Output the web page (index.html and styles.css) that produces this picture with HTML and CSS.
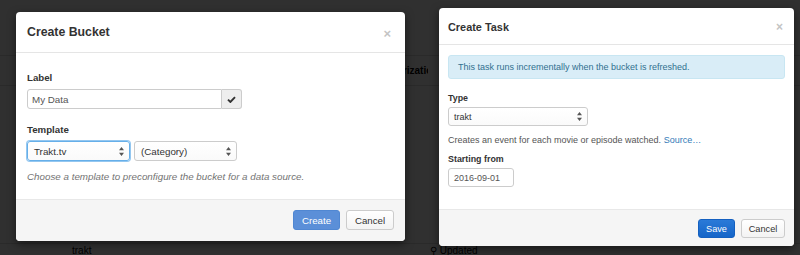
FILE: index.html
```html
<!DOCTYPE html>
<html lang="en">
<head>
    <meta charset="UTF-8">
    <meta name="viewport" content="width=device-width, initial-scale=1.0">
    <title>Create Bucket / Create Task</title>
    <link rel="stylesheet" href="styles.css">
</head>
<body>
    <!-- page underneath the dialogs -->
    <div class="page">
        <div class="page-head">
            <span class="col-auth">Authorization</span>
        </div>
        <div class="page-row">
            <span class="col-name">trakt</span>
            <span class="col-updated">&#9906; Updated</span>
        </div>
    </div>

    <div class="backdrop">
        <div class="modal modal-bucket">
            <div class="modal-header">
                <h4 class="modal-title">Create Bucket</h4>
                <span class="close">&times;</span>
            </div>
            <div class="modal-body">
                <div class="form-group">
                    <label>Label</label>
                    <div class="input-group">
                        <div class="form-control">My Data</div>
                        <span class="addon">
                            <svg width="9" height="7" viewBox="0 0 9 7"><path d="M1 3.6 L3.4 6 L8 1.2" fill="none" stroke="#333" stroke-width="1.9"/></svg>
                        </span>
                    </div>
                </div>
                <div class="form-group">
                    <label>Template</label>
                    <div class="select-row">
                        <div class="select select-focus">Trakt.tv
                            <svg class="arrows" width="5" height="9" viewBox="0 0 5 9"><path d="M2.5 0 L5 3.3 H0 Z M2.5 9 L5 5.7 H0 Z" fill="#555"/></svg>
                        </div>
                        <div class="select">(Category)
                            <svg class="arrows" width="5" height="9" viewBox="0 0 5 9"><path d="M2.5 0 L5 3.3 H0 Z M2.5 9 L5 5.7 H0 Z" fill="#555"/></svg>
                        </div>
                    </div>
                    <p class="help">Choose a template to preconfigure the bucket for a data source.</p>
                </div>
            </div>
            <div class="modal-footer">
                <button class="btn btn-create">Create</button>
                <button class="btn btn-default">Cancel</button>
            </div>
        </div>

        <div class="modal modal-task">
            <div class="modal-header">
                <h4 class="modal-title">Create Task</h4>
                <span class="close">&times;</span>
            </div>
            <div class="modal-body">
                <div class="alert">This task runs incrementally when the bucket is refreshed.</div>
                <div class="form-group">
                    <label>Type</label>
                    <div class="select select-type">trakt
                        <svg class="arrows" width="5" height="9" viewBox="0 0 5 9"><path d="M2.5 0 L5 3.3 H0 Z M2.5 9 L5 5.7 H0 Z" fill="#555"/></svg>
                    </div>
                    <p class="help">Creates an event for each movie or episode watched. <a href="#">Source&hellip;</a></p>
                </div>
                <div class="form-group">
                    <label>Starting from</label>
                    <div class="form-control date">2016-09-01</div>
                </div>
            </div>
            <div class="modal-footer">
                <button class="btn btn-save">Save</button>
                <button class="btn btn-default">Cancel</button>
            </div>
        </div>
    </div>
</body>
</html>
```

FILE: styles.css
```css
* {
    box-sizing: border-box;
}
body {
    margin: 0;
    width: 800px;
    height: 255px;
    overflow: hidden;
    position: relative;
    background: #fff;
    font-family: "Liberation Sans", Arial, sans-serif;
    color: #333;
}
.page {
    font-size: 10px;
    color: #000;
}
.page-head {
    margin-top: 55px;
    height: 31px;
    border-top: 1px solid #ddd;
    border-bottom: 1px solid #ddd;
    padding-left: 374px;
    line-height: 30px;
    font-weight: bold;
}
.col-auth {
    display: inline-block;
    width: 54px;
    overflow: hidden;
    white-space: nowrap;
    vertical-align: top;
}
.page-row {
    margin-top: 157px;
    display: flex;
    line-height: 14px;
    border-top: 1px solid #ddd;
}
.col-name {
    margin-left: 72px;
    width: 358px;
}
.backdrop {
    position: absolute;
    inset: 0;
    background: rgba(0, 0, 0, 0.81);
    display: flex;
    align-items: flex-start;
}
.modal {
    background: #fff;
    border-radius: 4px;
    box-shadow: 0 3px 9px rgba(0, 0, 0, 0.5);
    overflow: hidden;
}
.modal-header {
    display: flex;
    align-items: flex-start;
    justify-content: space-between;
    border-bottom: 1px solid #e5e5e5;
}
.modal-title {
    margin: 0;
    font-weight: bold;
    color: #333;
}
.close {
    color: #c4c4c4;
    font-weight: bold;
}
.modal-footer {
    display: flex;
    justify-content: flex-end;
    gap: 6px;
    background: #f5f5f5;
    border-top: 1px solid #e8e8e8;
}
label {
    display: block;
    font-weight: bold;
    color: #333;
}
.help {
    margin: 0;
}
.form-control, .select {
    border: 1px solid #ccc;
    border-radius: 3px;
    background: #fff;
    color: #555;
    display: flex;
    align-items: center;
}
.select {
    justify-content: space-between;
    background: linear-gradient(#fff, #fafafa);
}
.btn {
    font-family: inherit;
    border-radius: 3px;
    padding: 0;
    cursor: pointer;
}
.btn-default {
    background: linear-gradient(#fff, #f3f3f3);
    border: 1px solid #ccc;
    color: #333;
}

/* Create Bucket */
.modal-bucket {
    width: 389px;
    margin: 12px 0 0 16px;
}
.modal-bucket .modal-header {
    padding: 13px 11px 12px;
}
.modal-bucket .modal-title {
    font-size: 12.3px;
    line-height: 15px;
}
.modal-bucket .close {
    font-size: 13px;
    line-height: 13px;
    margin-top: 2px;
    margin-right: 3px;
}
.modal-bucket .modal-body {
    padding: 18px 11px 16px;
    font-size: 9.8px;
}
.modal-bucket label {
    font-size: 9.7px;
    line-height: 13px;
    margin-bottom: 5px;
}
.modal-bucket .form-group + .form-group {
    margin-top: 14px;
}
.input-group {
    display: flex;
    width: 215px;
    height: 20px;
}
.input-group .form-control {
    flex: 1;
    border-radius: 3px 0 0 3px;
    padding-left: 4px;
}
.addon {
    width: 20px;
    border: 1px solid #ccc;
    border-left: none;
    border-radius: 0 3px 3px 0;
    background: #eee;
    display: flex;
    align-items: center;
    justify-content: center;
}
.select-row {
    display: flex;
    gap: 4px;
}
.modal-bucket .select {
    width: 103px;
    height: 20px;
    padding: 0 5px 0 6px;
    color: #333;
}
.select-focus {
    border-color: #66afe9;
    box-shadow: 0 0 0 1px rgba(102, 175, 233, 0.7);
}
.modal-bucket .help {
    margin-top: 9px;
    line-height: 13px;
    font-style: italic;
    color: #737373;
}
.modal-bucket .modal-footer {
    padding: 10px 11px 11px;
}
.modal-bucket .btn {
    height: 20px;
    font-size: 9.7px;
}
.btn-create {
    width: 47px;
    background: #5b8fd8;
    border: 1px solid #5087d2;
    color: #fff;
}
.modal-bucket .btn-default {
    width: 48px;
}

/* Create Task */
.modal-task {
    width: 355px;
    margin: 8px 0 0 34px;
}
.modal-task .modal-header {
    padding: 12px 9px 10px;
}
.modal-task .modal-title {
    font-size: 10.9px;
    line-height: 14px;
}
.modal-task .close {
    font-size: 12px;
    line-height: 12px;
    margin-top: 1px;
    margin-right: 2px;
}
.modal-task .modal-body {
    padding: 10px 9px 22px;
    font-size: 9px;
}
.alert {
    height: 24px;
    padding-left: 9px;
    line-height: 22px;
    background: #d9edf7;
    border: 1px solid #c8e6f2;
    border-radius: 3px;
    color: #31708f;
    margin-bottom: 13px;
}
.modal-task label {
    font-size: 8.9px;
    line-height: 12px;
    margin-bottom: 3px;
}
.modal-task .form-group + .form-group {
    margin-top: 7px;
}
.select-type {
    width: 140px;
    height: 19px;
    padding: 0 5px 0 5px;
    color: #333;
}
.modal-task .help {
    margin-top: 8px;
    line-height: 12px;
    color: #555;
}
.modal-task .help a {
    color: #337ab7;
    text-decoration: none;
}
.date {
    width: 66px;
    height: 19px;
    padding-left: 5px;
}
.modal-task .modal-footer {
    padding: 9px 9px 8px;
}
.modal-task .btn {
    height: 19px;
    font-size: 9.2px;
}
.btn-save {
    width: 37px;
    background: linear-gradient(#2a7ad8, #1565c8);
    border: 1px solid #1460c0;
    color: #fff;
}
.modal-task .btn-default {
    width: 44px;
}
```
